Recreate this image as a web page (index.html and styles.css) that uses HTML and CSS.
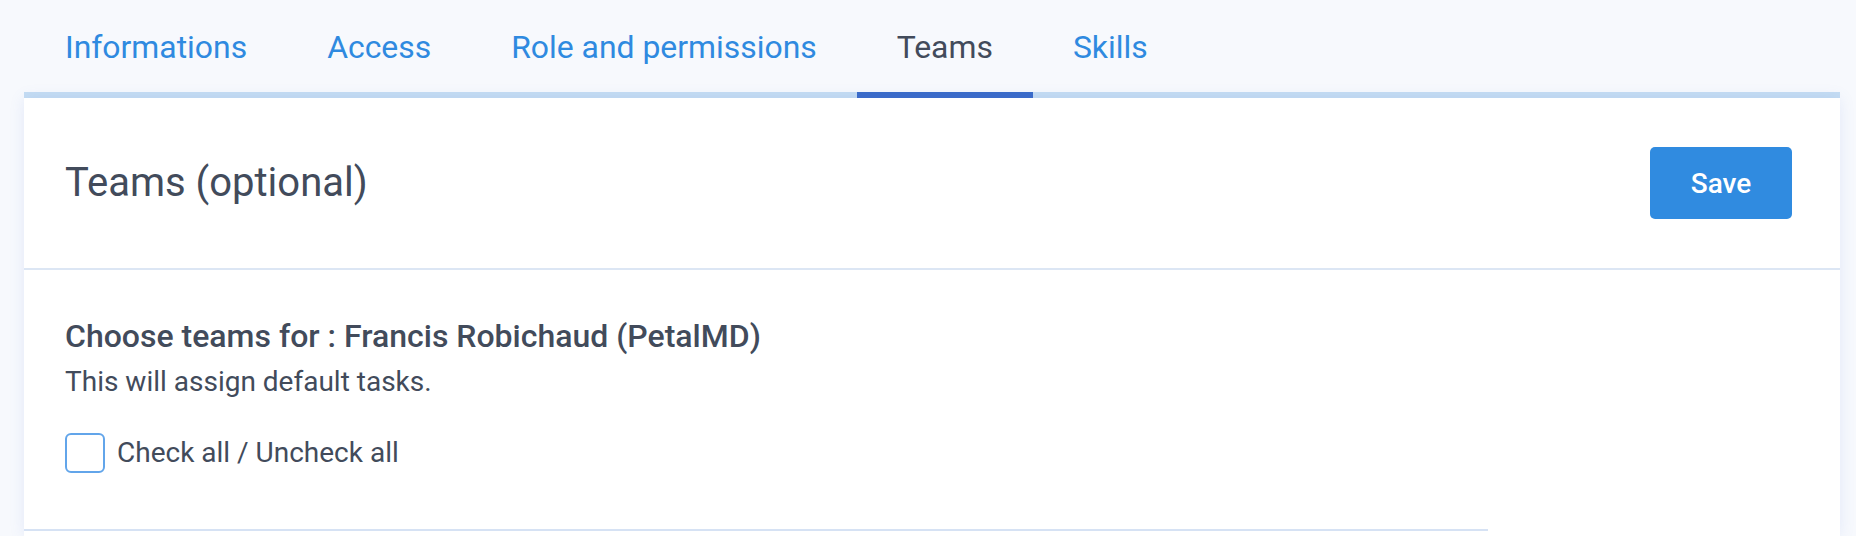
FILE: index.html
```html
<!DOCTYPE html>
<html lang="en">
<head>
<meta charset="utf-8">
<title>Teams</title>
<link rel="stylesheet" href="styles.css">
</head>
<body>
<div class="page">
  <nav class="tabs">
    <a class="tab">Informations</a>
    <a class="tab">Access</a>
    <a class="tab">Role and permissions</a>
    <a class="tab active">Teams</a>
    <a class="tab">Skills</a>
  </nav>
  <div class="card">
    <div class="card-header">
      <h1 class="title">Teams (optional)</h1>
      <button class="btn-save">Save</button>
    </div>
    <div class="section">
      <h2 class="section-title">Choose teams for : Francis Robichaud (PetalMD)</h2>
      <p class="section-desc">This will assign default tasks.</p>
      <label class="check-row">
        <span class="checkbox"></span>
        <span class="check-label">Check all / Uncheck all</span>
      </label>
    </div>
    <div class="divider"></div>
  </div>
</div>
</body>
</html>
```
FILE: styles.css
```css
html, body {
  margin: 0;
  padding: 0;
  background: #f7f9fd;
  font-family: Roboto, "Liberation Sans", sans-serif;
  color: #424b5b;
  height: 100%;
  overflow: hidden;
}

.page {
  padding: 0 16px 0 24px;
  display: flex;
  flex-direction: column;
  height: 100%;
  box-sizing: border-box;
}

.tabs {
  display: flex;
  height: 92px;
  border-bottom: 6px solid #c5ddf3;
}

.tab {
  display: flex;
  align-items: center;
  padding: 3px 40px 0 40px;
  font-size: 31.9px;
  line-height: 1;
  color: #2f8ae0;
  cursor: pointer;
}

.tab:first-child {
  padding-left: 41px;
}

.tab.active {
  color: #424b5b;
  border-bottom: 6px solid #3a6bc9;
  margin-bottom: -6px;
}

.card {
  flex: 1;
  background: #fff;
  box-shadow: 0 0 14px rgba(90, 120, 220, 0.13);
}

.card-header {
  height: 170px;
  display: flex;
  align-items: center;
  justify-content: space-between;
  padding: 0 48px 0 41px;
  border-bottom: 2px solid #dce6f4;
}

.title {
  margin: 0;
  font-size: 40px;
  font-weight: 400;
  line-height: 1.2;
  color: #424b5b;
}

.btn-save {
  width: 142px;
  height: 72px;
  border: none;
  border-radius: 5px;
  background: #308be0;
  color: #fff;
  font-family: Roboto, "Liberation Sans", sans-serif;
  font-size: 28px;
  font-weight: 500;
  cursor: pointer;
}

.section {
  padding: 47px 0 56px 41px;
}

.section-title {
  margin: 0;
  font-size: 32px;
  font-weight: 500;
  line-height: 1.2;
  color: #424b5b;
}

.section-desc {
  margin: 7px 0 0;
  font-size: 28px;
  line-height: 1.4;
  color: #424b5b;
}

.check-row {
  margin-top: 31px;
  display: flex;
  align-items: center;
  gap: 12px;
  cursor: pointer;
}

.checkbox {
  width: 40px;
  height: 40px;
  box-sizing: border-box;
  border: 2px solid #62a5ea;
  border-radius: 6px;
  background: #fff;
}

.check-label {
  font-size: 28px;
  line-height: 1.4;
  color: #424b5b;
}

.divider {
  width: 80.6%;
  height: 2px;
  background: #d6e2f4;
}
```
